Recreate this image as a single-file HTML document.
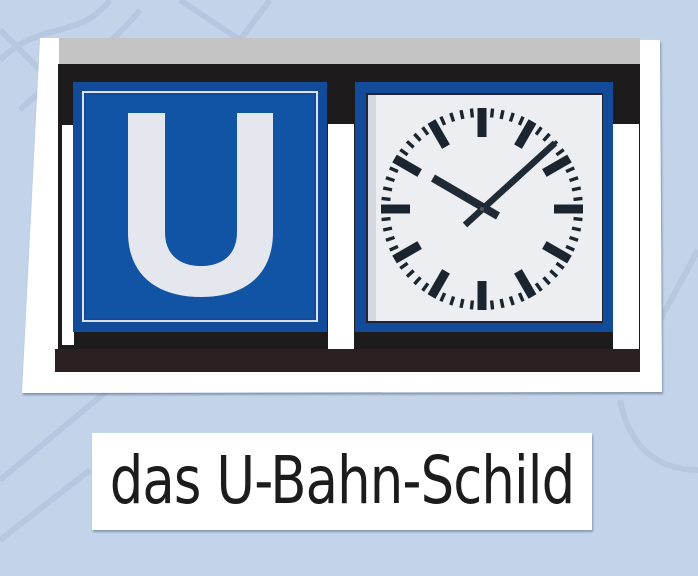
<!DOCTYPE html>
<html><head><meta charset="utf-8"><style>
html,body{margin:0;padding:0;width:698px;height:576px;overflow:hidden;background:#c3d4ea;}
.lbl{position:absolute;left:92px;top:433px;width:500px;height:97px;background:#fff;box-shadow:1px 2px 2px rgba(60,80,110,.45);overflow:hidden}
.lbl span{position:absolute;left:-150px;top:0;width:800px;white-space:nowrap;text-align:center;font-family:"DejaVu Sans Condensed","DejaVu Sans","Liberation Sans",sans-serif;font-size:66px;line-height:97px;color:#1c1c1c;transform:scaleX(0.89);transform-origin:400px 50%;letter-spacing:-1px;margin-top:-1px}
</style></head><body>
<svg width="698" height="576" style="position:absolute;left:0;top:0">
<g fill="none" stroke="#b3c6df" stroke-width="6" opacity=".8">
<path d="M0 60 C40 20 80 40 110 0"/><path d="M20 110 C60 70 100 60 140 10"/><path d="M180 0 L240 40 L270 0"/><path d="M0 480 L120 380 L210 330"/><path d="M0 540 L90 470"/><path d="M620 400 C630 450 660 470 698 470"/><path d="M660 320 L698 250"/><path d="M0 30 L40 70"/>
</g>
<polygon points="40,38 660,40 662,392 22,393" fill="#fff" style="filter:drop-shadow(1px 2px 1px rgba(60,80,110,.5))"/>
<rect x="59" y="38" width="581" height="28" fill="#c4c4c4"/>
<rect x="58" y="64" width="582" height="290" fill="#1d1b1c"/>
<rect x="62" y="125" width="12" height="220" fill="#fff"/>
<rect x="328" y="124" width="26" height="225" fill="#fff"/>
<rect x="613" y="124" width="26" height="225" fill="#fff"/>
<rect x="55" y="349" width="585" height="23" fill="#2a2020"/>
<rect x="73" y="82" width="254" height="250" fill="#124b9a"/>
<rect x="83" y="92" width="234" height="229" fill="none" stroke="#dde2ea" stroke-width="2"/>
<rect x="86" y="95" width="228" height="223" fill="#1153a5"/>
<path d="M128 113 H165 V232 C165 255 180 266 201 266 C222 266 237 255 237 232 V113 H273 V232 C273 275 245 297 201 297 C157 297 128 275 128 232 Z" fill="#e4e7ee"/>
<rect x="355" y="82" width="258" height="250" fill="#124b9a"/>
<rect x="366" y="93" width="237" height="230" fill="#223"/>
<rect x="368" y="95" width="234" height="226" fill="#eceef2"/>
<rect x="368" y="95" width="8" height="226" fill="#d3d7df"/>
<defs>
<rect id="m" x="-1.7" y="-101" width="3.4" height="9" fill="#1a2530"/>
<rect id="h" x="-4.5" y="-101" width="9" height="29" fill="#1a2530"/>
</defs>
<g transform="translate(482,209)">
<use href="#h" transform="rotate(0)"/><use href="#h" transform="rotate(30)"/><use href="#h" transform="rotate(60)"/><use href="#h" transform="rotate(90)"/><use href="#h" transform="rotate(120)"/><use href="#h" transform="rotate(150)"/><use href="#h" transform="rotate(180)"/><use href="#h" transform="rotate(210)"/><use href="#h" transform="rotate(240)"/><use href="#h" transform="rotate(270)"/><use href="#h" transform="rotate(300)"/><use href="#h" transform="rotate(330)"/>
<use href="#m" transform="rotate(6)"/><use href="#m" transform="rotate(12)"/><use href="#m" transform="rotate(18)"/><use href="#m" transform="rotate(24)"/><use href="#m" transform="rotate(36)"/><use href="#m" transform="rotate(42)"/><use href="#m" transform="rotate(48)"/><use href="#m" transform="rotate(54)"/><use href="#m" transform="rotate(66)"/><use href="#m" transform="rotate(72)"/><use href="#m" transform="rotate(78)"/><use href="#m" transform="rotate(84)"/><use href="#m" transform="rotate(96)"/><use href="#m" transform="rotate(102)"/><use href="#m" transform="rotate(108)"/><use href="#m" transform="rotate(114)"/><use href="#m" transform="rotate(126)"/><use href="#m" transform="rotate(132)"/><use href="#m" transform="rotate(138)"/><use href="#m" transform="rotate(144)"/><use href="#m" transform="rotate(156)"/><use href="#m" transform="rotate(162)"/><use href="#m" transform="rotate(168)"/><use href="#m" transform="rotate(174)"/><use href="#m" transform="rotate(186)"/><use href="#m" transform="rotate(192)"/><use href="#m" transform="rotate(198)"/><use href="#m" transform="rotate(204)"/><use href="#m" transform="rotate(216)"/><use href="#m" transform="rotate(222)"/><use href="#m" transform="rotate(228)"/><use href="#m" transform="rotate(234)"/><use href="#m" transform="rotate(246)"/><use href="#m" transform="rotate(252)"/><use href="#m" transform="rotate(258)"/><use href="#m" transform="rotate(264)"/><use href="#m" transform="rotate(276)"/><use href="#m" transform="rotate(282)"/><use href="#m" transform="rotate(288)"/><use href="#m" transform="rotate(294)"/><use href="#m" transform="rotate(306)"/><use href="#m" transform="rotate(312)"/><use href="#m" transform="rotate(318)"/><use href="#m" transform="rotate(324)"/><use href="#m" transform="rotate(336)"/><use href="#m" transform="rotate(342)"/><use href="#m" transform="rotate(348)"/><use href="#m" transform="rotate(354)"/>
</g>
<line x1="433" y1="178" x2="498" y2="216" stroke="#1f2a35" stroke-width="8"/>
<line x1="465" y1="225" x2="555" y2="143" stroke="#1f2a35" stroke-width="6.5"/>
<circle cx="482" cy="209" r="2" fill="#555"/>
</svg>
<div class="lbl"><span>das U-Bahn-Schild</span></div>
</body></html>
